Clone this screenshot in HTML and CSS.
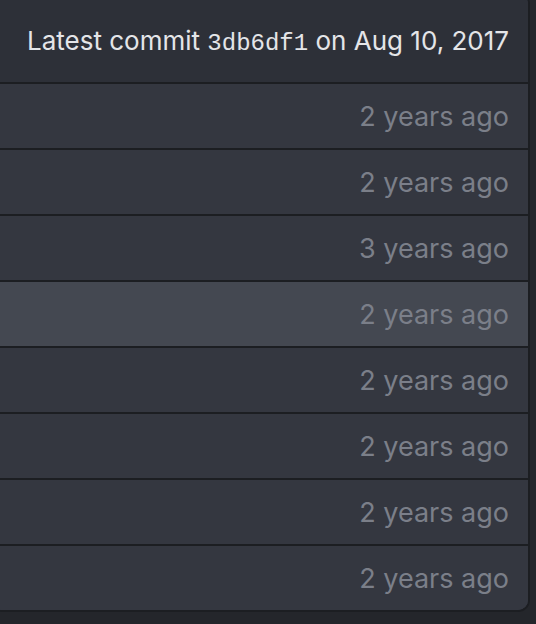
FILE: index.html
```html
<!DOCTYPE html>
<html lang="en">
<head>
    <meta charset="UTF-8">
    <meta name="viewport" content="width=device-width, initial-scale=1.0">
    <title>Files</title>
    <link rel="stylesheet" href="styles.css">
</head>
<body>
    <div class="file-box">
        <div class="commit-bar">
            <span>Latest commit <code>3db6df1</code> on Aug 10, 2017</span>
        </div>
        <div class="file-row"><span class="age">2 years ago</span></div>
        <div class="file-row"><span class="age">2 years ago</span></div>
        <div class="file-row"><span class="age">3 years ago</span></div>
        <div class="file-row hover"><span class="age">2 years ago</span></div>
        <div class="file-row"><span class="age">2 years ago</span></div>
        <div class="file-row"><span class="age">2 years ago</span></div>
        <div class="file-row"><span class="age">2 years ago</span></div>
        <div class="file-row"><span class="age">2 years ago</span></div>
    </div>
</body>
</html>
```

FILE: styles.css
```css
body {
    margin: 0;
    background: #24262b;
    font-family: Inter, "Noto Sans", sans-serif;
}
.file-box {
    margin-top: -8px;
    margin-left: -10px;
    width: 536px;
    border: 2px solid #1c1e22;
    border-radius: 12px;
    overflow: hidden;
    background: #343740;
}
.commit-bar {
    height: 88px;
    box-sizing: border-box;
    padding: 5px 19px 0 0;
    display: flex;
    align-items: center;
    justify-content: flex-end;
    background: #2d3038;
    color: #e4e5e8;
    font-size: 26px;
}
.commit-bar code {
    font-family: "Liberation Mono", "DejaVu Sans Mono", monospace;
    font-size: 24px;
}
.file-row {
    height: 64px;
    border-top: 2px solid #1c1e22;
    display: flex;
    align-items: center;
    justify-content: flex-end;
    padding-right: 19px;
    background: #343740;
}
.file-row.hover {
    background: #444851;
}
.age {
    color: #7b7f89;
    font-size: 27px;
}
```
